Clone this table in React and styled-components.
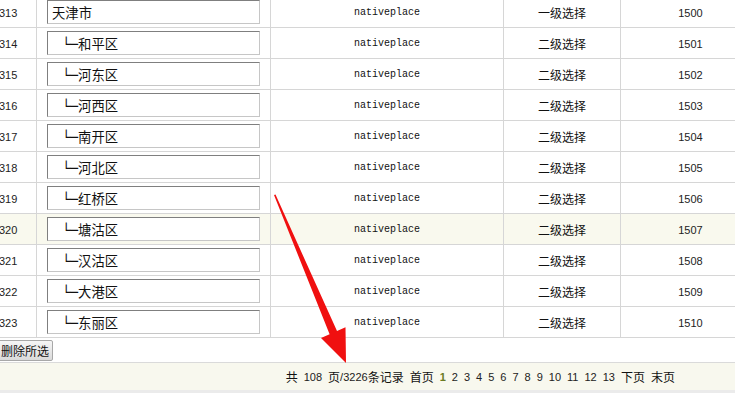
import React from 'react';
import styled, { createGlobalStyle, css } from 'styled-components';

const GlobalStyle = createGlobalStyle`
  html, body {
    margin: 0;
    padding: 0;
    background: #fff;
    overflow: hidden;
  }
  body {
    font-family: "Liberation Sans", "Noto Sans CJK SC", sans-serif;
    color: #222;
  }
`;

const Page = styled.div`
  position: relative;
  width: 735px;
  height: 393px;
  overflow: hidden;
`;

const Table = styled.div`
  margin-top: -3px;
  width: 760px;
`;

const Row = styled.div`
  display: grid;
  grid-template-columns: 37px 234px 233px 117px 139px;
  height: 31px;
  box-sizing: border-box;
  border-bottom: 1px solid #d6d6d6;
  background: ${props => (props.active ? '#f9f9ee' : '#fff')};
`;

const Cell = styled.div`
  display: flex;
  align-items: center;
  justify-content: center;
  border-right: 1px solid #d6d6d6;
  overflow: hidden;
  white-space: nowrap;
`;

const IdCell = styled(Cell)`
  justify-content: flex-start;
  font-size: 11px;
  color: #222;
  text-indent: -1px;
  padding-top: 1px;
`;

const NameCell = styled(Cell)`
  justify-content: flex-start;
  padding-left: 10px;
`;

const Field = styled.input`
  box-sizing: border-box;
  width: 213px;
  height: 24px;
  margin: 0;
  padding: 0 0 0 ${props => (props.level ? 14 : 4)}px;
  border: 1px solid;
  border-color: #7f7f7f #c6c6c6 #c6c6c6 #7f7f7f;
  background: #fff;
  font-family: "DejaVu Sans", "Noto Sans CJK SC", sans-serif;
  font-size: 13.33px;
  color: #111;
  outline: none;
`;

const KeyCell = styled(Cell)`
  font-family: "Liberation Mono", monospace;
  font-size: 10px;
  color: #111;
  padding-top: 1px;
`;

const TypeCell = styled(Cell)`
  font-family: "Noto Sans CJK SC", sans-serif;
  font-size: 12px;
  color: #111;
`;

const NumCell = styled(Cell)`
  font-size: 11px;
  color: #222;
  border-right: none;
  padding-top: 1px;
`;

const DeleteButton = styled.button`
  display: block;
  box-sizing: border-box;
  height: 21px;
  width: 56px;
  margin: 2px 0 0 -3px;
  padding: 0 0 0 3px;
  border: 1px solid #a8a8a8;
  border-radius: 2px;
  background: linear-gradient(#f6f6f6, #dadada);
  font-family: "Noto Sans CJK SC", sans-serif;
  font-size: 12px;
  color: #111;
  line-height: 19px;
  text-align: left;
`;

const Pager = styled.div`
  display: flex;
  align-items: center;
  justify-content: flex-end;
  gap: 6px;
  box-sizing: border-box;
  height: 32px;
  margin-top: 1px;
  padding-right: 60px;
  border-top: 1px solid #dadada;
  border-bottom: 4px solid #ebebeb;
  background: #f8f8ee;
  font-family: "Noto Sans CJK SC", sans-serif;
  font-size: 12px;
  color: #111;
`;

const Group = styled.span`
  display: inline-flex;
  align-items: center;
`;

const Num = styled.span`
  font-family: "Liberation Sans", sans-serif;
  font-size: 11px;
  color: #222;
  ${props => props.current && css`
    font-weight: bold;
    color: #6b7a22;
  `}
`;

const Arrow = styled.svg`
  position: absolute;
  left: 0;
  top: 0;
  pointer-events: none;
`;

const rows = [
  { id: '313', name: '天津市', level: 0, type: '一级选择', code: 1500 },
  { id: '314', name: '和平区', level: 1, type: '二级选择', code: 1501 },
  { id: '315', name: '河东区', level: 1, type: '二级选择', code: 1502 },
  { id: '316', name: '河西区', level: 1, type: '二级选择', code: 1503 },
  { id: '317', name: '南开区', level: 1, type: '二级选择', code: 1504 },
  { id: '318', name: '河北区', level: 1, type: '二级选择', code: 1505 },
  { id: '319', name: '红桥区', level: 1, type: '二级选择', code: 1506 },
  { id: '320', name: '塘沽区', level: 1, type: '二级选择', code: 1507, active: true },
  { id: '321', name: '汉沽区', level: 1, type: '二级选择', code: 1508 },
  { id: '322', name: '大港区', level: 1, type: '二级选择', code: 1509 },
  { id: '323', name: '东丽区', level: 1, type: '二级选择', code: 1510 },
];

const pages = [1, 2, 3, 4, 5, 6, 7, 8, 9, 10, 11, 12, 13];

export default function App() {
  return (
    <Page>
      <GlobalStyle />
      <Table>
        {rows.map(r => (
          <Row key={r.id} active={r.active}>
            <IdCell>{r.id}</IdCell>
            <NameCell>
              <Field
                readOnly
                level={r.level}
                value={(r.level ? '└─' : '') + r.name}
              />
            </NameCell>
            <KeyCell>nativeplace</KeyCell>
            <TypeCell>{r.type}</TypeCell>
            <NumCell>{r.code}</NumCell>
          </Row>
        ))}
      </Table>

      <DeleteButton>删除所选</DeleteButton>

      <Pager>
        <span>共</span>
        <Num>108</Num>
        <Group>
          页<Num>/3226</Num>条记录
        </Group>
        <span>首页</span>
        {pages.map(p => (
          <Num key={p} current={p === 1}>{p}</Num>
        ))}
        <span>下页</span>
        <span>末页</span>
      </Pager>

      <Arrow width="735" height="393" viewBox="0 0 735 393">
        <polygon
          fill="#f01010"
          points="274,195 275.5,194.6 337,331 345.5,327.2 346,363 321,338 329.6,334.2"
        />
      </Arrow>
    </Page>
  );
}
